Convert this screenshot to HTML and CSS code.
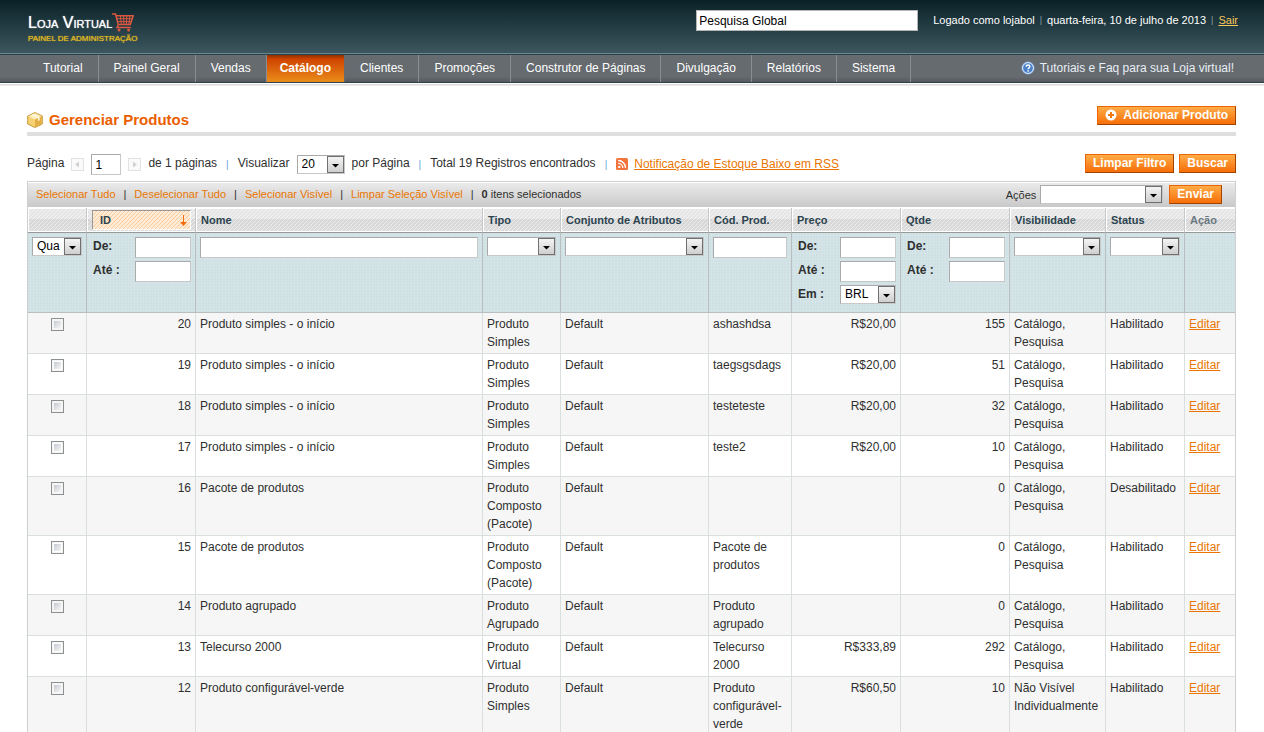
FILE: index.html
```html
<!DOCTYPE html>
<html lang="pt-BR">
<head>
<meta charset="utf-8">
<title>Gerenciar Produtos</title>
<link rel="stylesheet" href="styles.css">
</head>
<body>
<header class="header">
  <a class="logo" href="#">
    <span class="logo-row"><span class="logo-name">Loja Virtual</span>
      <svg class="cart" viewBox="0 0 22 19" width="22" height="19" fill="none" stroke="#dc5840"><path d="M0 1h3.500l2.800 10.500h12L21.200 2.700H4.500" stroke-width="1.500"/><path d="M5 5.700h15.400M5.600 8.600h13.800M8.400 3l1 8.500M11.600 3l.4 8.500M14.800 3l-.4 8.500M18 3l-1.200 8.500" stroke-width="1"/><path d="M6.400 11.500l-1.400 3h13.800" stroke-width="1.500"/><circle cx="7" cy="17" r="1.500" fill="#dc5840" stroke="none"/><circle cx="16.600" cy="17" r="1.500" fill="#dc5840" stroke="none"/></svg></span>
    <span class="logo-sub">PAINEL DE ADMINISTRAÇÃO</span>
  </a>
  <div class="header-right">
    <input class="global-search" type="text" value="Pesquisa Global" aria-label="Pesquisa Global">
    <p class="user-info"><span>Logado como lojabol</span><span class="sep">|</span><span>quarta-feira, 10 de julho de 2013</span><span class="sep">|</span><a href="#">Sair</a></p>
  </div>
</header>
<nav class="nav">
  <ul class="menu">
    <li><a href="#">Tutorial</a></li>
    <li><a href="#">Painel Geral</a></li>
    <li><a href="#">Vendas</a></li>
    <li class="active"><a href="#">Catálogo</a></li>
    <li><a href="#">Clientes</a></li>
    <li><a href="#">Promoções</a></li>
    <li><a href="#">Construtor de Páginas</a></li>
    <li><a href="#">Divulgação</a></li>
    <li><a href="#">Relatórios</a></li>
    <li><a href="#">Sistema</a></li>
  </ul>
  <a class="help" href="#"><svg width="14" height="14" viewBox="0 0 14 14"><circle cx="7" cy="7" r="6.500" fill="#7ba6dc"/><circle cx="7" cy="7" r="5.400" fill="#4c80c6" stroke="#e4effb" stroke-width="1"/><path d="M5.200 5.700c0-2.400 3.700-2.300 3.700-.1C8.900 6.900 7.100 6.900 7.100 8.200M7.100 9.200v1.500" fill="none" stroke="#fff" stroke-width="1.400"/></svg>Tutoriais e Faq para sua Loja virtual!</a>
</nav>
<main class="content">
  <div class="title-bar">
    <h1><svg width="16" height="16" viewBox="0 0 16 16"><path d="M8 .6l7.300 3.400v8L8 15.500.7 12V4z" fill="#f6d272" stroke="#c9973a" stroke-width="1"/><path d="M8 1.200l6.500 3L8 7.600 1.500 4.200z" fill="#fdf0be"/><path d="M8 7.600v7.200l6.500-3.100V4.400z" fill="#e3ae45"/><path d="M4.200 2.900l6.700 3.200v3l1.700-.8V5.200L6 2.100z" fill="#fff8dc"/></svg>Gerenciar Produtos</h1>
    <button class="btn" type="button"><svg width="12" height="12" viewBox="0 0 12 12"><circle cx="6" cy="6" r="5.500" fill="#fff"/><path d="M6 3v6M3 6h6" stroke="#f47a10" stroke-width="2"/></svg>Adicionar Produto</button>
  </div>
  <div class="toolbar">
    <div class="pager">
      <label for="page">Página</label>
      <button class="arrow prev" type="button" aria-label="Anterior"><svg width="11" height="11" viewBox="0 0 11 11"><path d="M7 2.500v6l-4-3z" fill="#d2d2d2"/></svg></button>
      <input id="page" class="field page-field" type="text" value="1">
      <button class="arrow next" type="button" aria-label="Próxima"><svg width="11" height="11" viewBox="0 0 11 11"><path d="M4 2.500v6l4-3z" fill="#d2d2d2"/></svg></button>
      <span>de 1 páginas</span><span class="bar">|</span>
      <label for="limit">Visualizar</label>
      <select id="limit" class="select limit"><option>20</option></select>
      <span>por Página</span><span class="bar">|</span>
      <span>Total 19 Registros encontrados</span><span class="bar">|</span>
      <a class="rss" href="#"><svg width="12" height="12" viewBox="0 0 12 12"><rect width="12" height="12" rx="1.500" fill="#f0743c"/><circle cx="3.300" cy="8.900" r="1.200" fill="#fff"/><path d="M2.200 5.300a4.600 4.600 0 0 1 4.600 4.600M2.200 2.500a7.400 7.400 0 0 1 7.400 7.400" fill="none" stroke="#fff" stroke-width="1.300"/></svg><span>Notificação de Estoque Baixo em RSS</span></a>
    </div>
    <div class="filter-actions"><button class="btn" type="button">Limpar Filtro</button><button class="btn" type="button">Buscar</button></div>
  </div>
  <section class="grid">
    <div class="massaction">
      <div class="links"><a href="#">Selecionar Tudo</a><span>|</span><a href="#">Deselecionar Tudo</a><span>|</span><a href="#">Selecionar Visível</a><span>|</span><a href="#">Limpar Seleção Visível</a><span>|</span><p><b>0</b> itens selecionados</p></div>
      <div class="submit"><label for="action">Ações</label><select id="action" class="select action"><option></option></select><button class="btn" type="button">Enviar</button></div>
    </div>
    <table>
      <colgroup><col class="c-check"><col class="c-id"><col><col class="c-type"><col class="c-set"><col class="c-sku"><col class="c-price"><col class="c-qty"><col class="c-vis"><col class="c-status"><col class="c-act"></colgroup>
      <thead>
        <tr class="headings"><th></th><th class="sorted"><a href="#">ID<svg width="7" height="11" viewBox="0 0 7 11"><path d="M3 0h1v7h3L3.500 11 0 7h3z" fill="#f76b0a"/></svg></a></th><th>Nome</th><th>Tipo</th><th>Conjunto de Atributos</th><th>Cód. Prod.</th><th>Preço</th><th>Qtde</th><th>Visibilidade</th><th>Status</th><th class="plain">Ação</th></tr>
        <tr class="filter">
          <td><select class="select" aria-label="Seleção"><option>Qua</option></select></td>
          <td><div class="range"><label for="id1">De:</label><input id="id1" class="field" type="text"></div><div class="range"><label for="id2">Até :</label><input id="id2" class="field" type="text"></div></td>
          <td><input class="field" type="text" aria-label="Nome"></td>
          <td><select class="select" aria-label="Tipo"><option></option></select></td>
          <td><select class="select" aria-label="Conjunto de Atributos"><option></option></select></td>
          <td><input class="field" type="text" aria-label="Cód. Prod."></td>
          <td><div class="range"><label for="p1">De:</label><input id="p1" class="field" type="text"></div><div class="range"><label for="p2">Até :</label><input id="p2" class="field" type="text"></div><div class="range"><label for="p3">Em :</label><select id="p3" class="select"><option>BRL</option></select></div></td>
          <td><div class="range"><label for="q1">De:</label><input id="q1" class="field" type="text"></div><div class="range"><label for="q2">Até :</label><input id="q2" class="field" type="text"></div></td>
          <td><select class="select" aria-label="Visibilidade"><option></option></select></td>
          <td><select class="select" aria-label="Status"><option></option></select></td>
          <td></td>
        </tr>
      </thead>
      <tbody>
        <tr><td><input type="checkbox" aria-label="20"></td><td class="num">20</td><td>Produto simples - o início</td><td>Produto Simples</td><td>Default</td><td>ashashdsa</td><td class="num">R$20,00</td><td class="num">155</td><td>Catálogo, Pesquisa</td><td>Habilitado</td><td><a href="#">Editar</a></td></tr>
        <tr><td><input type="checkbox" aria-label="19"></td><td class="num">19</td><td>Produto simples - o início</td><td>Produto Simples</td><td>Default</td><td>taegsgsdags</td><td class="num">R$20,00</td><td class="num">51</td><td>Catálogo, Pesquisa</td><td>Habilitado</td><td><a href="#">Editar</a></td></tr>
        <tr><td><input type="checkbox" aria-label="18"></td><td class="num">18</td><td>Produto simples - o início</td><td>Produto Simples</td><td>Default</td><td>testeteste</td><td class="num">R$20,00</td><td class="num">32</td><td>Catálogo, Pesquisa</td><td>Habilitado</td><td><a href="#">Editar</a></td></tr>
        <tr><td><input type="checkbox" aria-label="17"></td><td class="num">17</td><td>Produto simples - o início</td><td>Produto Simples</td><td>Default</td><td>teste2</td><td class="num">R$20,00</td><td class="num">10</td><td>Catálogo, Pesquisa</td><td>Habilitado</td><td><a href="#">Editar</a></td></tr>
        <tr><td><input type="checkbox" aria-label="16"></td><td class="num">16</td><td>Pacote de produtos</td><td>Produto Composto (Pacote)</td><td>Default</td><td></td><td></td><td class="num">0</td><td>Catálogo, Pesquisa</td><td>Desabilitado</td><td><a href="#">Editar</a></td></tr>
        <tr><td><input type="checkbox" aria-label="15"></td><td class="num">15</td><td>Pacote de produtos</td><td>Produto Composto (Pacote)</td><td>Default</td><td>Pacote de produtos</td><td></td><td class="num">0</td><td>Catálogo, Pesquisa</td><td>Habilitado</td><td><a href="#">Editar</a></td></tr>
        <tr><td><input type="checkbox" aria-label="14"></td><td class="num">14</td><td>Produto agrupado</td><td>Produto Agrupado</td><td>Default</td><td>Produto agrupado</td><td></td><td class="num">0</td><td>Catálogo, Pesquisa</td><td>Habilitado</td><td><a href="#">Editar</a></td></tr>
        <tr><td><input type="checkbox" aria-label="13"></td><td class="num">13</td><td>Telecurso 2000</td><td>Produto Virtual</td><td>Default</td><td>Telecurso 2000</td><td class="num">R$333,89</td><td class="num">292</td><td>Catálogo, Pesquisa</td><td>Habilitado</td><td><a href="#">Editar</a></td></tr>
        <tr><td><input type="checkbox" aria-label="12"></td><td class="num">12</td><td>Produto configurável-verde</td><td>Produto Simples</td><td>Default</td><td>Produto configurável-verde</td><td class="num">R$60,50</td><td class="num">10</td><td>Não Visível Individualmente</td><td>Habilitado</td><td><a href="#">Editar</a></td></tr>
      </tbody>
    </table>
  </section>
</main>
</body>
</html>
```
FILE: styles.css
```css
* { box-sizing: border-box; }
body { margin: 0; background: #fff; color: #2f2f2f; font: 12px/18px "Liberation Sans", Arial, sans-serif; }
p, h1, ul { margin: 0; padding: 0; }
input, select, button { font: inherit; }
svg { flex: none; }

.header { display: flex; justify-content: space-between; align-items: flex-start; height: 55px; padding: 10px 26px 0 28px; background: linear-gradient(#0a2227, #3d5760); border-bottom: 1px solid #2b424b; box-shadow: inset 0 -1px #6b8790; }
.logo { display: block; padding-top: 3px; color: #fff; text-decoration: none; }
.logo-row { display: flex; height: 20px; }
.logo-name { font-size: 16px; line-height: 20px; font-variant: small-caps; text-shadow: 0 0 1px #fff; }
.logo-sub { display: block; color: #e3bb22; font-size: 8px; line-height: 12px; text-shadow: 0 0 1px #e3bb22; }
.header-right { display: flex; gap: 15px; }
.global-search { width: 222px; height: 21px; padding: 0 2px; border: 1px solid #b5b5b5; background: #fff; color: #000; }
.user-info { display: flex; gap: 5px; color: #fff; font-size: 11px; line-height: 20px; }
.user-info .sep { color: #8fa0a6; font-size: 9px; }
.user-info a { color: #f5c85c; }

.nav { display: flex; justify-content: space-between; height: 28px; padding: 0 30px 0 28px; background: linear-gradient(#666b70 80%, #55595e); border-bottom: 1px solid #2b424b; box-shadow: 0 1px #fff, 0 2px #dcdcdc, 0 3px #ececec; }
.menu { display: flex; list-style: none; }
.menu li { border-right: 1px solid #8a8e92; }
.menu a { display: block; padding: 0 15px; color: #fff; line-height: 27px; text-decoration: none; }
.menu .active { border-right-color: #666b70; background: linear-gradient(#8c3000, #cf4400 15%, #ea8d1a); }
.menu .active a { padding: 0 13px; font-weight: bold; }
.help { display: flex; align-items: center; gap: 5px; height: 25px; color: #e8eef6; text-decoration: none; }

.content { padding: 20px 28px 0 27px; }
.title-bar { display: flex; justify-content: space-between; align-items: flex-start; height: 33px; padding-top: 3px; border-bottom: 4px solid #dfdfdf; }
h1 { display: flex; align-items: center; gap: 6px; color: #eb5e00; font-size: 15px; line-height: 26px; padding-top: 1px; }
.btn { display: flex; align-items: center; gap: 6px; height: 19px; padding: 0 7px 1px; border: 1px solid; border-color: #ed6502 #a04300 #a04300 #ed6502; background: linear-gradient(#ffac47, #f76e08); color: #fff; font-weight: bold; line-height: 15px; white-space: nowrap; }

.toolbar { display: flex; justify-content: space-between; align-items: flex-start; padding-top: 18px; height: 45px; }
.pager { display: flex; align-items: center; height: 21px; gap: 7px; }
.pager > span, .pager > label { margin-bottom: 4px; }
.pager .bar { margin: 0 2px; color: #5fa6dc; font-size: 10px; }
.arrow { width: 13px; height: 13px; padding: 0; border: 1px solid #e2e2e2; background: #fafafa; display: flex; align-items: center; justify-content: center; }
.rss { display: flex; align-items: center; gap: 6px; margin-bottom: 2px; color: #ea7601; }
.rss span { text-decoration: underline; }
.filter-actions { display: flex; gap: 5px; }

.field { width: 100%; height: 21px; padding: 0 3px; border: 1px solid; border-color: #aaa #c8c8c8 #c8c8c8 #aaa; background: #fff; display: block; }
.page-field { width: 30px; }
.select { display: block; appearance: none; width: 100%; height: 19px; padding: 0 4px; border: 1px solid; border-color: #aaa #c8c8c8 #c8c8c8 #aaa; border-radius: 0; line-height: 17px; color: #000; background: #fff url("data:image/svg+xml,%3Csvg xmlns='http://www.w3.org/2000/svg' width='17' height='17'%3E%3ClinearGradient id='g' x2='0' y2='1'%3E%3Cstop stop-color='%23f5f5f5'/%3E%3Cstop offset='1' stop-color='%23cdcdcd'/%3E%3C/linearGradient%3E%3Crect x='.5' y='.5' width='16' height='16' fill='url(%23g)' stroke='%23707070'/%3E%3Cpath d='M5 8h7L8.500 11.500z'/%3E%3C/svg%3E") right center no-repeat; }
.limit { width: 48px; }

.grid { border: 1px solid #ccd0d0; border-bottom: 0; }
.massaction { display: flex; justify-content: space-between; align-items: flex-start; height: 26px; padding: 0 13px 0 8px; border: solid #fff; border-width: 1px 0; background: linear-gradient(#eaeaea, #c9c9c9); font-size: 11px; }
.links { display: flex; gap: 8px; line-height: 23px; }
.links a { color: #ea7601; text-decoration: none; }
.submit { display: flex; align-items: center; gap: 4px; height: 23px; }
.submit .action { width: 123px; margin-right: 2px; }
.submit .btn { font-size: 12px; }

table { width: 100%; table-layout: fixed; border-collapse: separate; border-spacing: 0; }
.c-check { width: 59px; }
.c-id, .c-price, .c-qty { width: 109px; }
.c-type { width: 78px; }
.c-set { width: 148px; }
.c-sku { width: 83px; }
.c-vis { width: 96px; }
.c-status { width: 79px; }
.c-act { width: 50px; }
th, td { border-right: 1px solid #d9dede; vertical-align: top; text-align: left; }
tr > :last-child { border-right: 0; }
.headings th { height: 25px; padding: 2px 4px 2px 5px; border-color: #c4c8c8; border-bottom: 1px solid #999; color: #2d444f; font-size: 11px; line-height: 20px; box-shadow: inset 1px 1px #fff, inset 0 -1px #fff; background: url("data:image/svg+xml,%3Csvg xmlns='http://www.w3.org/2000/svg' width='4' height='4' fill='%23fff' fill-opacity='.5'%3E%3Cpath d='M3 0h1v1h-1zM2 1h1v1h-1zM1 2h1v1h-1zM0 3h1v1h-1z'/%3E%3C/svg%3E"), linear-gradient(#e6e6e6 46%, #d6d6d6 46%, #dcdcdc); }
.headings .plain { color: #6b7a82; }
.sorted a { display: flex; justify-content: space-between; align-items: center; height: 20px; padding: 0 3px 0 7px; border: 1px solid; border-color: #999 #fff #fff #999; background: #fdebd7 url("data:image/svg+xml,%3Csvg xmlns='http://www.w3.org/2000/svg' width='4' height='4' fill='%23fdcb98'%3E%3Cpath d='M3 0h1v1h-1zM2 1h1v1h-1zM1 2h1v1h-1zM0 3h1v1h-1z'/%3E%3C/svg%3E"); color: inherit; text-decoration: none; }
.filter td { padding: 4px 4px 3px; border-right-color: #b9bfc0; border-bottom: 1px solid #b9bfc0; background: #d5e4e6 url("data:image/svg+xml,%3Csvg xmlns='http://www.w3.org/2000/svg' width='3' height='3'%3E%3Cpath d='M0 0h2v2h-2z' fill='%23cee0e4'/%3E%3C/svg%3E"); }
.range { display: flex; align-items: flex-start; justify-content: space-between; height: 24px; padding-left: 2px; font-weight: bold; }
.range .field, .range .select { width: 56px; font-weight: normal; }
tbody td { padding: 2px 4px; border-bottom: 1px solid #d9dede; }
tbody tr:nth-child(odd) { background: #f6f6f6; }
.num { text-align: right; }
tbody a { color: #ea7601; }
input[type="checkbox"] { display: block; appearance: none; width: 13px; height: 13px; margin: 3px auto 0; border: 1px solid #8e8f8f; background: linear-gradient(135deg, #c5cad2, #f6f6f6) content-box; padding: 2px; box-shadow: inset 0 0 0 1px #f4f4f4; }
```
